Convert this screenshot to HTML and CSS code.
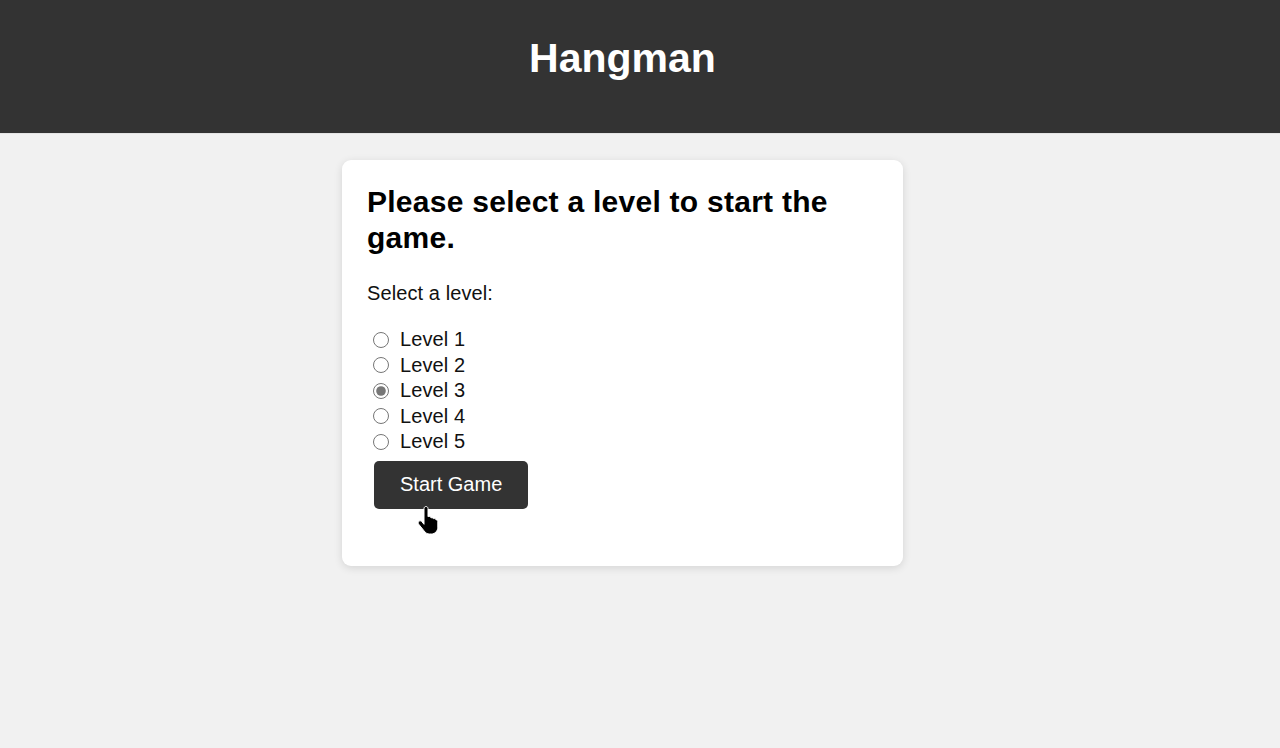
FILE: index.html
```html
<!DOCTYPE html>
<html>
<head>
<meta charset="utf-8">
<title>Hangman</title>
<link rel="stylesheet" href="styles.css">
</head>
<body>
<header class="top">
  <h1 class="title">Hangman</h1>
</header>
<main class="page">
  <section class="card">
    <h2 class="prompt">Please select a level to start the game.</h2>
    <form class="level-form">
      <p class="label">Select a level:</p>
      <div class="levels">
        <label class="level"><input type="radio" name="level" value="1"> Level 1</label>
        <label class="level"><input type="radio" name="level" value="2"> Level 2</label>
        <label class="level"><input type="radio" name="level" value="3" checked> Level 3</label>
        <label class="level"><input type="radio" name="level" value="4"> Level 4</label>
        <label class="level"><input type="radio" name="level" value="5"> Level 5</label>
      </div>
      <div class="btn-wrap">
        <button type="button" class="start">Start Game</button>
        <svg class="cursor" width="24" height="30" viewBox="0 0 24 30" aria-hidden="true">
          <path d="M7 2.5c0-1.2 1-2 2-2s2 .8 2 2v8.2l.6-.2c1-.3 2 .2 2.3 1l.2.4c.9-.4 2-.1 2.4.8 1-.4 2.1.1 2.5 1 .9.1 1.8.9 1.8 2v5.5c0 3.6-2.6 6.8-6.4 6.8h-1.8c-2.3 0-4.3-1.2-5.5-3.1L1.5 18c-.6-1-.3-2.2.6-2.8.9-.6 2.1-.4 2.7.4L7 18.3z" fill="#000" stroke="#fff" stroke-width="1"/>
        </svg>
      </div>
    </form>
  </section>
</main>
</body>
</html>
```
FILE: styles.css
```css
html, body {
  margin: 0;
  padding: 0;
}
body {
  background: #f1f1f1;
  font-family: "Liberation Sans", Arial, sans-serif;
  color: #111;
  min-height: 748px;
}
.top {
  background: #333333;
  height: 134px;
  box-sizing: border-box;
  padding-right: 35px;
  display: flex;
  justify-content: center;
  border-bottom: 1px solid #e4e4e4;
}
.title {
  margin: 34px 0 0;
  color: #fff;
  font-size: 41px;
  line-height: 48px;
  font-weight: bold;
}
.page {
  padding: 26px 35px 0 0;
  display: flex;
  justify-content: center;
}
.card {
  width: 561px;
  box-sizing: border-box;
  background: #fff;
  border-radius: 9px;
  box-shadow: 0 2px 8px rgba(0,0,0,0.12);
  padding: 24px 25px 57px;
}
.prompt {
  margin: 0;
  font-size: 30px;
  line-height: 36px;
  font-weight: bold;
  letter-spacing: 0.26px;
  color: #000;
}
.level-form {
  margin: 0;
}
.label {
  margin: 26px 0 22px;
  font-size: 20px;
  line-height: 23px;
  letter-spacing: 0.1px;
  color: #111;
}
.levels {
  display: flex;
  flex-direction: column;
}
.level {
  display: flex;
  align-items: center;
  height: 25.5px;
  font-size: 20px;
  letter-spacing: 0.1px;
  color: #111;
}
.level input {
  width: 16px;
  height: 16px;
  margin: 0 11px 0 6px;
  accent-color: #777;
}
.btn-wrap {
  position: relative;
  margin: 6px 0 0 7px;
}
.start {
  background: #333;
  color: #fff;
  border: none;
  border-radius: 5px;
  font-family: "Liberation Sans", Arial, sans-serif;
  font-size: 20px;
  line-height: 23px;
  padding: 12.5px 26px;
  cursor: pointer;
}
.cursor {
  position: absolute;
  left: 43px;
  top: 45px;
}
```
